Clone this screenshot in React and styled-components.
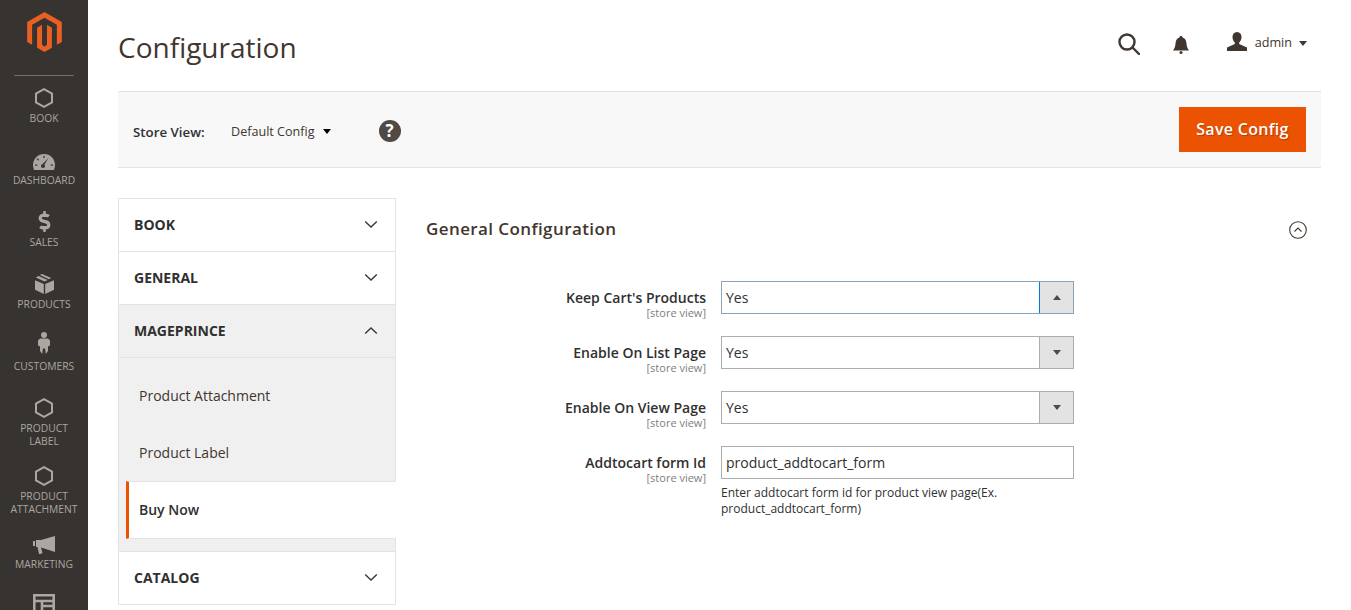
import React from 'react';
import styled, { createGlobalStyle } from 'styled-components';
import { FaDollarSign } from 'react-icons/fa';

const Global = createGlobalStyle`
  html, body { margin: 0; padding: 0; height: 610px; overflow: hidden; background: #fff; }
  body { font-family: "Open Sans", sans-serif; color: #303030; font-size: 14px; }
  * { box-sizing: border-box; }
`;

const Page = styled.div`
  display: flex;
  width: 1351px;
  height: 610px;
  overflow: hidden;
`;

const Sidebar = styled.nav`
  width: 88px;
  height: 610px;
  flex: none;
  background: #373330;
  overflow: hidden;
`;

const LogoBox = styled.div`
  height: 76px;
  margin: 0 14px 4px;
  padding-top: 12px;
  border-bottom: 1px solid #736e69;
  display: flex;
  justify-content: center;
  align-items: flex-start;
`;

const NavItem = styled.div`
  height: ${p => p.$h}px;
  display: flex;
  flex-direction: column;
  align-items: center;
  color: #aaa6a0;
  font-size: 10.3px;
  line-height: 13px;
  text-align: center;
  text-transform: uppercase;
  white-space: pre-line;
`;

const NavIcon = styled.div`
  height: 28px;
  margin-bottom: 4px;
  display: flex;
  align-items: flex-end;
  justify-content: center;
`;

const Main = styled.main`
  flex: 1;
  padding: 0 30px;
  min-width: 0;
`;

const Header = styled.header`
  height: 91px;
  display: flex;
  justify-content: space-between;
  align-items: flex-start;
`;

const Title = styled.h1`
  margin: 26px 0 0;
  font-size: 28px;
  line-height: 42px;
  font-weight: 400;
  color: #41362f;
`;

const Actions = styled.div`
  display: flex;
  align-items: center;
  margin-top: 31px;
  padding-right: 14px;
`;

const SearchIcon = styled.svg`
  margin-top: 2px;
`;

const BellIcon = styled.svg`
  margin-left: 33px;
  margin-top: 4px;
`;

const UserIcon = styled.svg`
  margin-left: 38px;
  margin-top: -2px;
`;

const AdminName = styled.span`
  font-size: 12.6px;
  line-height: 22px;
  color: #41362f;
  margin-left: 8px;
`;

const Caret = styled.span`
  display: inline-block;
  width: 0;
  height: 0;
  margin-left: ${p => p.$ml}px;
  border-left: 4px solid transparent;
  border-right: 4px solid transparent;
  border-top: 5px solid ${p => p.$c};
`;

const StoreBar = styled.div`
  height: 77px;
  background: #f8f8f8;
  border-top: 1px solid #e3e3e3;
  border-bottom: 1px solid #e3e3e3;
  display: flex;
  align-items: center;
  padding: 0 15px;
`;

const StoreLabel = styled.span`
  font-size: 13.3px;
  font-weight: 600;
  color: #303030;
  width: 98px;
  padding-top: 4px;
`;

const StoreValue = styled.span`
  font-size: 12.6px;
  color: #41362f;
  display: flex;
  align-items: center;
  padding-top: 4px;
`;

const Help = styled.span`
  width: 22px;
  height: 22px;
  margin-left: 48px;
  margin-top: 3px;
  border-radius: 50%;
  background: #514943;
  color: #fff;
  font-size: 17px;
  font-weight: 700;
  line-height: 22px;
  text-align: center;
`;

const SaveButton = styled.button`
  margin-left: auto;
  width: 127px;
  height: 45px;
  padding: 0 0 2px;
  border: 0;
  background: #eb5202;
  color: #fff;
  font-family: inherit;
  font-size: 16px;
  font-weight: 600;
  letter-spacing: .3px;
  text-shadow: 1px 1px 1px rgba(0,0,0,.25);
`;

const Columns = styled.div`
  display: flex;
  margin-top: 30px;
`;

const Tabs = styled.div`
  width: 278px;
  flex: none;
  border: 1px solid #e3e3e3;
  border-bottom: 0;
`;

const TabHead = styled.div`
  height: 53px;
  padding: 0 17px 1px 15px;
  display: flex;
  justify-content: space-between;
  align-items: center;
  border-bottom: 1px solid #e3e3e3;
  background: ${p => p.$open ? '#f0f0f0' : '#fff'};
  font-size: 14px;
  font-weight: 700;
  color: #303030;
  text-transform: uppercase;
`;

const SubList = styled.div`
  background: #f0f0f0;
  padding-top: 10px;
  height: 194px;
  border-bottom: 1px solid #e3e3e3;
`;

const SubItem = styled.div`
  height: 57px;
  padding-left: 20px;
  line-height: 56px;
  font-size: 14px;
  color: #41362f;
`;

const ActiveItem = styled.div`
  height: 58px;
  margin: -1px -1px 0 7px;
  padding-left: 10px;
  line-height: 56px;
  font-size: 14px;
  font-weight: 600;
  color: #303030;
  background: #fff;
  border-left: 3px solid #eb5202;
  border-bottom: 1px solid #e3e3e3;
  border-top: 1px solid #e3e3e3;
`;

const Content = styled.section`
  flex: 1;
  padding-left: 30px;
`;

const SectionHead = styled.div`
  height: 83px;
  padding: 19px 14px 0 0;
  display: flex;
  justify-content: space-between;
  align-items: flex-start;
`;

const SectionTitle = styled.h2`
  margin: 0;
  font-size: 17px;
  line-height: 24px;
  font-weight: 600;
  letter-spacing: .4px;
  color: #41362f;
`;

const CollapseIcon = styled.svg`
  margin-top: 4px;
`;

const Row = styled.div`
  display: grid;
  grid-template-columns: 280px 353px;
  column-gap: 15px;
  margin-bottom: 17px;
`;

const LabelCol = styled.div`
  text-align: right;
`;

const FieldLabel = styled.div`
  font-size: 14px;
  line-height: 18px;
  padding-top: 8px;
  font-weight: 600;
  color: #303030;
`;

const Scope = styled.div`
  font-size: 11px;
  line-height: 12px;
  color: #808080;
`;

const SelectBox = styled.div`
  height: 33px;
  display: flex;
  border: 1px solid ${p => p.$open ? '#8ea3b5' : '#adadad'};
  background: #fff;
`;

const SelectValue = styled.div`
  flex: 1;
  padding-left: 4px;
  font-size: 14px;
  line-height: 31px;
  color: #303030;
`;

const SelectArrow = styled.div`
  width: 34px;
  flex: none;
  background: #e3e3e3;
  border-left: 1px solid ${p => p.$open ? '#007bdb' : '#adadad'};
  display: flex;
  align-items: center;
  justify-content: center;
`;

const TriangleDown = styled.span`
  width: 0;
  height: 0;
  border-left: 4px solid transparent;
  border-right: 4px solid transparent;
  border-top: 5px solid #514943;
`;

const TriangleUp = styled(TriangleDown)`
  border-top: 0;
  border-bottom: 5px solid #514943;
`;

const TextInput = styled.input`
  display: block;
  width: 100%;
  height: 33px;
  border: 1px solid #adadad;
  padding: 0 4px;
  font-family: inherit;
  font-size: 14px;
  color: #303030;
  outline: none;
`;

const Note = styled.div`
  margin-top: 6px;
  font-size: 12px;
  line-height: 16px;
  color: #303030;
`;

const Hexagon = () => (
  <svg width="18" height="20" viewBox="0 0 18 20" fill="none" stroke="#aaa6a0" strokeWidth="2">
    <path d="M9 1.200 17 5.600v8.800l-8 4.400-8-4.400V5.600z" />
  </svg>
);

const MagentoLogo = () => (
  <svg width="35" height="40" viewBox="1.600 0 20.800 24" fill="#eb5f23">
    <path d="M12 24l-4.455-2.572v-12l2.970-1.715v12.001L12 20.859l1.485-1.145V7.713l2.970 1.715v12L12 24zM22.391 6v12l-2.969 1.714V7.713L12 3.430 4.574 7.713v12.001L1.609 18V6L12 0l10.391 6z" />
  </svg>
);

const Gauge = () => (
  <svg width="22" height="16" viewBox="0 0 22 16" fill="#aaa6a0">
    <path d="M11 0C4.900 0 0 4.900 0 11c0 1.800.4 3.500 1.100 5h19.800c.7-1.500 1.100-3.200 1.100-5C22 4.900 17.100 0 11 0z" />
    <path d="M15.500 4 11.300 10.800l-1.700-.9z" fill="#373330" />
    <circle cx="10" cy="12" r="2" fill="#373330" />
    <g fill="#373330">
      <rect x="10.400" y="1.800" width="1.200" height="2.300" />
      <rect x="4.200" y="4.300" width="1.200" height="2.300" transform="rotate(-45 4.800 5.400)" />
      <rect x="2" y="10.500" width="2.300" height="1.200" />
      <rect x="17.700" y="10.500" width="2.300" height="1.200" />
    </g>
  </svg>
);

const Box = () => (
  <svg width="19" height="20" viewBox="0 0 19 20" fill="#aaa6a0">
    <path d="M0 6.200 8.800 10v10L0 15.800zM19 6.200 10.200 10v10L19 15.800z" />
    <path d="M7 0 16.200 4 14 5.200 4.800 1.100zM3.500 1.900 12.700 6 9.500 7.500.8 3.600z" />
  </svg>
);

const Person = () => (
  <svg width="12" height="24" viewBox="0 0 12 24" fill="#aaa6a0">
    <circle cx="6" cy="3" r="3" />
    <path d="M2 6.500h8L12 8.500v5l-2 1V19l-2.200 3L7 16.500H5L4.200 22 2 19v-4.500l-2-1v-5z" />
  </svg>
);

const Megaphone = () => (
  <svg width="22" height="18" viewBox="0 0 22 18" fill="#aaa6a0">
    <rect x="0" y="5" width="2" height="5" />
    <path d="M3 4h5L22 0v16L8 11.500 9.500 16.500 8 18H6L4.500 11H3z" />
  </svg>
);

const Layout = () => (
  <svg width="22" height="22" viewBox="0 0 22 22" fill="none" stroke="#aaa6a0" strokeWidth="2.600">
    <path d="M1.300 1.300h19.400v19.400H1.300zM1.300 7h19.400M9 7v14M9 12h12" />
  </svg>
);

const menu = [
  { label: 'Book', icon: <Hexagon />, h: 62 },
  { label: 'Dashboard', icon: <Gauge />, h: 62 },
  { label: 'Sales', icon: <FaDollarSign size={21} />, h: 62 },
  { label: 'Products', icon: <Box />, h: 62 },
  { label: 'Customers', icon: <Person />, h: 62 },
  { label: 'Product\nLabel', icon: <Hexagon />, h: 68 },
  { label: 'Product\nAttachment', icon: <Hexagon />, h: 68 },
  { label: 'Marketing', icon: <Megaphone />, h: 62 },
  { label: '', icon: <Layout />, h: 62 },
];

const Chevron = ({ up }) => (
  <svg width="14" height="9" viewBox="0 0 14 9" fill="none" stroke="#41362f" strokeWidth="1.400">
    <path d={up ? 'M1.200 7.500 7 2l5.800 5.500' : 'M1.200 1.500 7 7l5.800-5.500'} />
  </svg>
);

const fields = [
  { label: "Keep Cart's Products", open: true },
  { label: 'Enable On List Page' },
  { label: 'Enable On View Page' },
];

export default function App() {
  return (
    <Page>
      <Global />
      <Sidebar>
        <LogoBox><MagentoLogo /></LogoBox>
        {menu.map((m, i) => (
          <NavItem key={i} $h={m.h}>
            <NavIcon>{m.icon}</NavIcon>
            {m.label}
          </NavItem>
        ))}
      </Sidebar>
      <Main>
        <Header>
          <Title>Configuration</Title>
          <Actions>
            <SearchIcon width="22" height="22" viewBox="0 0 22 22" fill="none" stroke="#41362f" strokeWidth="2.400">
              <circle cx="9" cy="9" r="7.500" />
              <path d="M14.500 14.500 21 21" strokeLinecap="round" />
            </SearchIcon>
            <BellIcon width="16" height="18" viewBox="0 0 16 18" fill="#41362f">
              <path d="M8 0c1 0 1.600.6 1.600 1.500C12 2.200 13.200 4 13.400 7c.2 3 .8 5 2.600 7.500H0C1.800 12 2.400 10 2.600 7 2.800 4 4 2.200 6.400 1.500 6.400.6 7 0 8 0z" />
              <circle cx="8" cy="16.500" r="1.500" />
            </BellIcon>
            <UserIcon width="20" height="20" viewBox="0 0 20 20" fill="#41362f">
              <path d="M10 0c3 0 4.500 2.200 4.500 5 0 2.500-1 4.500-2.300 5.500v1.500L20 15.500V19H0v-3.500L7.800 12v-1.500C6.500 9.500 5.500 7.500 5.500 5 5.500 2.200 7 0 10 0z" />
            </UserIcon>
            <AdminName>admin</AdminName>
            <Caret $ml={7} $c="#41362f" />
          </Actions>
        </Header>
        <StoreBar>
          <StoreLabel>Store View:</StoreLabel>
          <StoreValue>Default Config<Caret $ml={8} $c="#000" /></StoreValue>
          <Help>?</Help>
          <SaveButton>Save Config</SaveButton>
        </StoreBar>
        <Columns>
          <Tabs>
            <TabHead>Book<Chevron /></TabHead>
            <TabHead>General<Chevron /></TabHead>
            <TabHead $open>Mageprince<Chevron up /></TabHead>
            <SubList>
              <SubItem>Product Attachment</SubItem>
              <SubItem>Product Label</SubItem>
              <ActiveItem>Buy Now</ActiveItem>
            </SubList>
            <TabHead>Catalog<Chevron /></TabHead>
          </Tabs>
          <Content>
            <SectionHead>
              <SectionTitle>General Configuration</SectionTitle>
              <CollapseIcon width="18" height="18" viewBox="0 0 18 18" fill="none" stroke="#41362f">
                <circle cx="9" cy="9" r="8.300" strokeWidth="1.100" />
                <path d="M5.500 10.500 9 7l3.500 3.500" strokeWidth="1.100" />
              </CollapseIcon>
            </SectionHead>
            {fields.map(f => (
              <Row key={f.label}>
                <LabelCol>
                  <FieldLabel>{f.label}</FieldLabel>
                  <Scope>[store view]</Scope>
                </LabelCol>
                <SelectBox $open={f.open}>
                  <SelectValue>Yes</SelectValue>
                  <SelectArrow $open={f.open}>{f.open ? <TriangleUp /> : <TriangleDown />}</SelectArrow>
                </SelectBox>
              </Row>
            ))}
            <Row>
              <LabelCol>
                <FieldLabel>Addtocart form Id</FieldLabel>
                <Scope>[store view]</Scope>
              </LabelCol>
              <div>
                <TextInput readOnly value="product_addtocart_form" />
                <Note>Enter addtocart form id for product view page(Ex. product_addtocart_form)</Note>
              </div>
            </Row>
          </Content>
        </Columns>
      </Main>
    </Page>
  );
}
